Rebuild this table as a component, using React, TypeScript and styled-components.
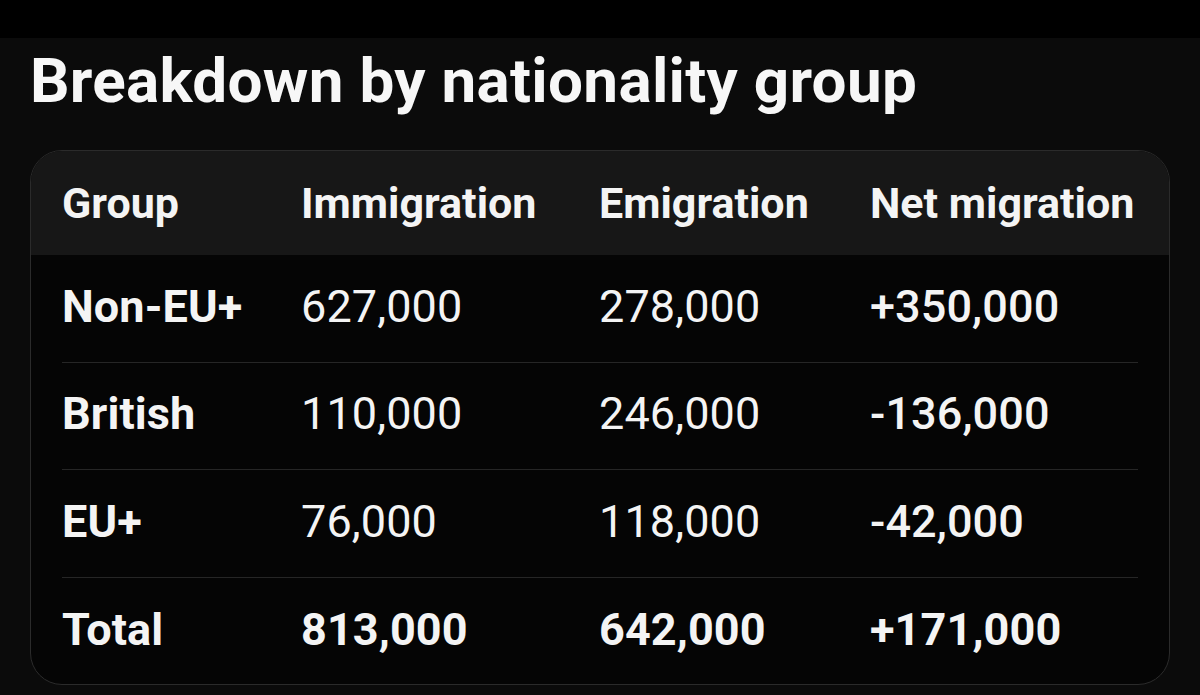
import React from "react";
import styled, { createGlobalStyle } from "styled-components";

const Global = createGlobalStyle`
  html, body { margin: 0; padding: 0; background: #0b0b0b; }
  body { font-family: Roboto, "Liberation Sans", Arial, sans-serif; color: #f4f4f4; }
`;

const Page = styled.div`
  width: 1200px;
  height: 695px;
  background: #0b0b0b;
  display: flex;
  flex-direction: column;
  overflow: hidden;
`;

const TopBar = styled.div`
  height: 38px;
  background: #000;
  flex-shrink: 0;
`;

const Content = styled.div`
  padding: 0 30px;
  display: flex;
  flex-direction: column;
`;

const Title = styled.h2`
  margin: 0;
  padding-top: 9px;
  height: 112px;
  box-sizing: border-box;
  font-size: 62px;
  font-weight: 700;
  letter-spacing: 0.3px;
  line-height: 68px;
  color: #f7f7f7;
  white-space: nowrap;
`;

const Card = styled.div`
  border: 1.5px solid #2b2b2b;
  border-radius: 32px;
  overflow: hidden;
  background: #050505;
  height: 535px;
  box-sizing: border-box;
`;

const Header = styled.div`
  background: #171717;
  height: 104px;
  padding: 0 31px;
  display: grid;
  grid-template-columns: 239px 298px 271px 1fr;
  align-items: center;
`;

const HeadCell = styled.div`
  font-size: 43px;
  font-weight: 700;
  letter-spacing: 0;
  white-space: nowrap;
`;

const Body = styled.div`
  padding: 0 31px;
`;

const Row = styled.div<{ $last?: boolean }>`
  height: 107.5px;
  display: grid;
  grid-template-columns: 239px 298px 271px 1fr;
  align-items: center;
  border-bottom: ${(p) => (p.$last ? "none" : "1.5px solid #262626")};
  box-sizing: border-box;
`;

const Cell = styled.div<{ $weight: number }>`
  font-size: 45px;
  font-weight: ${(p) => p.$weight};
  letter-spacing: 0.1px;
  white-space: nowrap;
  padding-bottom: 4px;
`;

const rows = [
  { g: "Non-EU+", i: "627,000", e: "278,000", n: "+350,000" },
  { g: "British", i: "110,000", e: "246,000", n: "-136,000" },
  { g: "EU+", i: "76,000", e: "118,000", n: "-42,000" },
  { g: "Total", i: "813,000", e: "642,000", n: "+171,000", total: true },
];

export default function App() {
  return (
    <Page>
      <Global />
      <TopBar />
      <Content>
        <Title>Breakdown by nationality group</Title>
        <Card>
          <Header>
            <HeadCell>Group</HeadCell>
            <HeadCell>Immigration</HeadCell>
            <HeadCell>Emigration</HeadCell>
            <HeadCell>Net migration</HeadCell>
          </Header>
          <Body>
            {rows.map((r, idx) => (
              <Row key={r.g} $last={idx === rows.length - 1}>
                <Cell $weight={700}>{r.g}</Cell>
                <Cell $weight={r.total ? 700 : 400}>{r.i}</Cell>
                <Cell $weight={r.total ? 700 : 400}>{r.e}</Cell>
                <Cell $weight={r.total ? 700 : 500}>{r.n}</Cell>
              </Row>
            ))}
          </Body>
        </Card>
      </Content>
    </Page>
  );
}
